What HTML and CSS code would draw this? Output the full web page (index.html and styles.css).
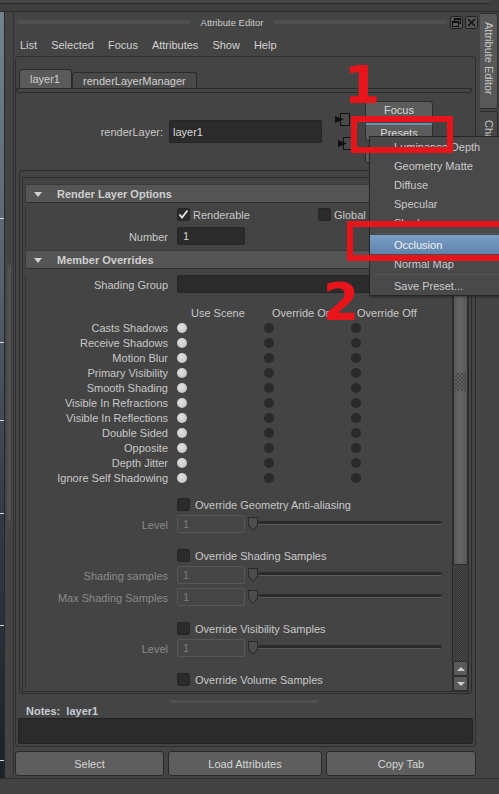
FILE: index.html
```html
<!DOCTYPE html>
<html>
<head>
<meta charset="utf-8">
<title>Attribute Editor</title>
<link rel="stylesheet" href="styles.css">
</head>
<body>
<div class="topstrip"><div class="prevpanel"></div></div>
<div class="workspace">
  <div class="leftstrip">
    <div class="viewport"></div>
    <div class="splitter"><div class="vgrip"></div></div>
  </div>
  <div class="editor">
    <div class="titlebar">
      <div class="grip"></div>
      <div class="title">Attribute Editor</div>
      <div class="grip"></div>
      <div class="tbtn first"><svg width="11" height="11" viewBox="0 0 11 11"><rect x="3.5" y="1.5" width="6" height="5" fill="none" stroke="#111"/><rect x="1.5" y="4.5" width="6" height="5" fill="#5a5a5a" stroke="#111"/><line x1="1.5" y1="5.5" x2="7.5" y2="5.5" stroke="#111"/><line x1="3.5" y1="2.5" x2="9.5" y2="2.5" stroke="#111"/></svg></div>
      <div class="tbtn"><svg width="11" height="11" viewBox="0 0 11 11"><path d="M2 2 L9 9 M9 2 L2 9" stroke="#111" stroke-width="1.6"/></svg></div>
    </div>
    <div class="menubar">
      <span>List</span><span>Selected</span><span>Focus</span><span>Attributes</span><span>Show</span><span>Help</span>
    </div>
    <div class="frame">
      <div class="tabs">
        <div class="tab active">layer1</div>
        <div class="tab">renderLayerManager</div>
      </div>
      <div class="tabpane"></div>
      <div class="rlsection">
        <div class="rllabel">renderLayer:</div>
        <div class="rlfield">layer1</div>
        <div class="conn">
          <svg class="conn1" width="15" height="13" viewBox="0 0 15 13"><rect x="5.5" y="0.5" width="9" height="12" fill="#4a4a4a" stroke="#111"/><path d="M0 3 L9 6.5 L0 10Z" fill="#111"/></svg>
          <svg class="conn2" width="15" height="13" viewBox="0 0 15 13"><rect x="5.5" y="0.5" width="9" height="12" fill="#4a4a4a" stroke="#111"/><path d="M0 3 L9 6.5 L0 10Z" fill="#111"/></svg>
        </div>
        <div class="rlbtns">
          <div class="btn">Focus</div>
          <div class="btn pressed">Presets</div>
          <div class="btn third"></div>
        </div>
      </div>
      <div class="scrollframe">
        <div class="scrollinner">
          <div class="content">
            <div class="sechead"><span class="tri"></span>Render Layer Options</div>
            <div class="secbody">
              <div class="cbrow first">
                <span class="cb"><svg width="13" height="13" viewBox="0 0 13 13"><polyline points="2.5,6.5 5,9.5 10.5,2.5" fill="none" stroke="#e6e6e6" stroke-width="1.8"/></svg></span>
                <span class="cbtext rend">Renderable</span>
                <span class="cb"></span>
                <span class="cbtext">Global</span>
              </div>
              <div class="frow numrow">
                <span class="lbl">Number</span>
                <span class="field">1</span>
              </div>
            </div>
            <div class="sechead second"><span class="tri"></span>Member Overrides</div>
            <div class="secbody">
              <div class="frow sgrow">
                <span class="lbl">Shading Group</span>
                <span class="field wide"></span>
              </div>
              <div class="colhead">
                <span class="ch1">Use Scene</span><span class="ch2">Override On</span><span class="ch3">Override Off</span>
              </div>
              <div class="rrow"><span class="lbl">Casts Shadows</span><i class="dot on"></i><i class="dot"></i><i class="dot"></i></div>
              <div class="rrow"><span class="lbl">Receive Shadows</span><i class="dot on"></i><i class="dot"></i><i class="dot"></i></div>
              <div class="rrow"><span class="lbl">Motion Blur</span><i class="dot on"></i><i class="dot"></i><i class="dot"></i></div>
              <div class="rrow"><span class="lbl">Primary Visibility</span><i class="dot on"></i><i class="dot"></i><i class="dot"></i></div>
              <div class="rrow"><span class="lbl">Smooth Shading</span><i class="dot on"></i><i class="dot"></i><i class="dot"></i></div>
              <div class="rrow"><span class="lbl">Visible In Refractions</span><i class="dot on"></i><i class="dot"></i><i class="dot"></i></div>
              <div class="rrow"><span class="lbl">Visible In Reflections</span><i class="dot on"></i><i class="dot"></i><i class="dot"></i></div>
              <div class="rrow"><span class="lbl">Double Sided</span><i class="dot on"></i><i class="dot"></i><i class="dot"></i></div>
              <div class="rrow"><span class="lbl">Opposite</span><i class="dot on"></i><i class="dot"></i><i class="dot"></i></div>
              <div class="rrow"><span class="lbl">Depth Jitter</span><i class="dot on"></i><i class="dot"></i><i class="dot"></i></div>
              <div class="rrow"><span class="lbl">Ignore Self Shadowing</span><i class="dot on"></i><i class="dot"></i><i class="dot"></i></div>

              <div class="cbrow ovr first-ovr"><span class="cb"></span><span class="cbtext">Override Geometry Anti-aliasing</span></div>
              <div class="frow drow"><span class="lbl dis">Level</span><span class="field dis">1</span><span class="sthumb"></span><span class="strack"></span></div>

              <div class="cbrow ovr"><span class="cb"></span><span class="cbtext">Override Shading Samples</span></div>
              <div class="frow drow"><span class="lbl dis">Shading samples</span><span class="field dis">1</span><span class="sthumb"></span><span class="strack"></span></div>
              <div class="frow drow"><span class="lbl dis">Max Shading Samples</span><span class="field dis">1</span><span class="sthumb"></span><span class="strack"></span></div>

              <div class="cbrow ovr"><span class="cb"></span><span class="cbtext">Override Visibility Samples</span></div>
              <div class="frow drow"><span class="lbl dis">Level</span><span class="field dis">1</span><span class="sthumb"></span><span class="strack"></span></div>

              <div class="cbrow ovr"><span class="cb"></span><span class="cbtext">Override Volume Samples</span></div>
            </div>
          </div>
          <div class="vscroll">
            <div class="thumb"><div class="tgrip"></div></div>
            <div class="track"></div>
            <div class="arrow"><span class="up"></span></div>
            <div class="arrow"><span class="down"></span></div>
          </div>
        </div>
      </div>
      <div class="notes">
        <div class="ngrip"></div>
        <div class="nlabel">Notes:&nbsp; layer1</div>
        <div class="ntext"></div>
      </div>
    </div>
    <div class="bottombtns">
      <div class="bbtn b1">Select</div>
      <div class="bbtn b2">Load Attributes</div>
      <div class="bbtn b3">Copy Tab</div>
    </div>
  </div>
  <div class="sidetabs">
    <div class="stab active">Attribute Editor</div>
    <div class="stab">Channel Box / Layer Editor</div>
  </div>
</div>
<div class="bottomstrip"></div>

<div class="popup">
  <div class="pitem">Luminance Depth</div>
  <div class="pitem">Geometry Matte</div>
  <div class="pitem">Diffuse</div>
  <div class="pitem">Specular</div>
  <div class="pitem">Shadow</div>
  <div class="psep"></div>
  <div class="pitem hl">Occlusion</div>
  <div class="pitem">Normal Map</div>
  <div class="psep"></div>
  <div class="pitem">Save Preset...</div>
</div>
<div class="redbox r1"></div>
<div class="redbox r2"></div>
<div class="reddigit d1">1</div>
<div class="reddigit d2">2</div>
</body>
</html>
```
FILE: styles.css
```css
* { box-sizing: border-box; }
html, body { margin: 0; padding: 0; }
body {
  width: 499px; height: 794px; overflow: hidden; position: relative;
  background: #444444;
  font-family: "Liberation Sans", Arial, sans-serif;
  font-size: 11px; color: #c8c8c8;
}

/* top strip */
.topstrip { height: 12px; background: #3f3f3f; border-bottom: 1px solid #2c2c2c; }
.prevpanel { height: 4px; background: #464646; border-bottom: 1px solid #2b2b2b; margin-right: 8px; border-bottom-right-radius: 3px; }

.workspace { display: flex; height: 766px; }

/* left strip */
.leftstrip { width: 14px; display: flex; border-right: 1px solid #333; }
.viewport {
  width: 5px; border-right: 1px solid #272727;
  background:
    linear-gradient(#d5dbe1, #d5dbe1) 0 206px / 4px 1px no-repeat,
    linear-gradient(#d5dbe1, #d5dbe1) 0 330px / 4px 1px no-repeat,
    linear-gradient(#d5dbe1, #d5dbe1) 0 408px / 4px 1px no-repeat,
    linear-gradient(#d5dbe1, #d5dbe1) 0 501px / 4px 1px no-repeat,
    linear-gradient(#d5dbe1, #d5dbe1) 0 613px / 4px 1px no-repeat,
    linear-gradient(#d5dbe1, #d5dbe1) 0 748px / 4px 1px no-repeat,
    linear-gradient(180deg, #74828f 0%, #56616d 35%, #333c46 65%, #1b2129 100%);
}
.splitter { flex: 1; display: flex; justify-content: center; padding-top: 253px; }
.vgrip { width: 4px; height: 256px; background: repeating-conic-gradient(#5c5c5c 0 25%, transparent 0 50%) 0 0 / 2px 2px; }

/* editor */
.editor { width: 465px; display: flex; flex-direction: column; }

.titlebar { height: 20px; display: flex; align-items: center; padding: 0 1px 0 3px; }
.grip { flex: 1; height: 4px; background: repeating-conic-gradient(#5a5a5a 0 25%, transparent 0 50%) 0 0 / 2px 2px; }
.title { margin: 0 11px; font-size: 9.5px; color: #cdcdcd; }
.tbtn { width: 13px; height: 13px; border: 1px solid #222; background: #565656; border-radius: 2px; display: flex; align-items: center; justify-content: center; margin-left: 2px; }
.tbtn.first { margin-left: 3px; }
.tbtn svg { display: block; }

.menubar { height: 24px; display: flex; align-items: center; padding: 1px 0 0 6px; gap: 14px; color: #d2d2d2; }

.frame {
  height: 691px; margin: 0 3px 0 1px;
  border: 1px solid #2e2e2e; border-radius: 3px;
  display: flex; flex-direction: column;
}
.tabs { height: 31px; display: flex; align-items: flex-end; padding-left: 3px; }
.tab {
  height: 16px; padding: 0 10px; line-height: 16px;
  border: 1px solid #2b2b2b; border-bottom: none; border-radius: 3px 3px 0 0;
  background: #494949; color: #d0d0d0;
}
.tab.active { height: 19px; line-height: 19px; background: #5a5a5a; width: 53px; }
.tabpane { height: 5px; border: 1px solid #2b2b2b; border-radius: 0 0 3px 3px; margin-right: 3px; }

.rlsection { height: 77px; display: flex; align-items: flex-start; padding-top: 8px; }
.rllabel { width: 147px; margin-top: 19px; height: 23px; line-height: 24px; text-align: right; color: #cacaca; }
.rlfield {
  width: 153px; height: 23px; margin: 19px 0 0 6px;
  background: #2b2b2b; border: 1px solid #262626; border-radius: 2px;
  padding-left: 3px; line-height: 22px; color: #d8d8d8;
}
.conn { margin-left: 13px; width: 18px; display: flex; flex-direction: column; padding-top: 12px; }
.conn svg { display: block; }
.conn .conn2 { margin: 11px 0 0 3px; }
.rlbtns { margin-left: 12px; width: 68px; display: flex; flex-direction: column; gap: 4px; }
.btn {
  height: 18px; line-height: 17px; text-align: center;
  background: #5c5c5c; border: 1px solid #2c2c2c; border-radius: 3px;
  color: #d8d8d8;
}
.btn.pressed { border-top: 2px solid #6f8fae; line-height: 16px; }
.btn.third { height: 17px; margin-top: 1px; }

/* scroll area */
.scrollframe {
  height: 524px; margin: 0 3px;
  border: 1px solid #2c2c2c; border-radius: 3px;
  padding: 6px 2px 1px 2px;
}
.scrollinner { height: 100%; border: 1px solid #2c2c2c; display: flex; overflow: hidden; }
.content { flex: 1; padding: 6px 2px 0 2px; overflow: hidden; }

.sechead {
  height: 19px; display: flex; align-items: center; padding: 1px 0 0 8px;
  background: #555555; border: 1px solid #3a3a3a; border-bottom-color: #2e2e2e;
  font-weight: bold; color: #cfcfcf;
}
.sechead.second { margin-top: 2px; }
.tri { width: 0; height: 0; border-left: 4px solid transparent; border-right: 4px solid transparent; border-top: 5px solid #d2d2d2; margin-right: 15px; }
.secbody { border-left: 1px solid #333; padding-bottom: 3px; }

.lbl { width: 142px; text-align: right; flex: none; }
.lbl.dis { color: #8a8a8a; }

.cbrow { height: 14px; display: flex; align-items: center; padding-left: 151px; }
.cbrow.first { margin-top: 4px; }
.cb { width: 13px; height: 13px; background: #2b2b2b; border: 1px solid #262626; border-radius: 2px; flex: none; }
.cb svg { display: block; margin: -1px 0 0 -1px; }
.cbtext { margin-left: 3px; padding-top: 1px; }
.cbtext.rend { width: 125px; }
.cbrow.ovr { margin-top: 15px; }
.cbrow.ovr .cbtext { margin-left: 5px; }
.cbrow.first-ovr { margin-top: 12px; }

.frow { height: 18px; display: flex; align-items: center; }
.frow .lbl { padding-top: 1px; }
.numrow { margin-top: 6px; }
.sgrow { margin-top: 6px; }
.drow { margin-top: 4px; }
.field {
  width: 68px; height: 18px; margin-left: 9px; flex: none;
  background: #2b2b2b; border: 1px solid #262626; border-radius: 2px;
  padding-left: 5px; line-height: 17px; color: #d2d2d2;
}
.field.wide { width: 264px; }
.field.dis { background: #454545; border-color: #575757; color: #7c7c7c; }
.sthumb {
  width: 10px; height: 14px; margin-left: 3px; flex: none;
  background: #2a2a2a;
  clip-path: polygon(0 0, 100% 0, 100% 60%, 50% 100%, 0 60%);
  position: relative;
}
.sthumb::after {
  content: ""; position: absolute; left: 1px; top: 1px; right: 1px; bottom: 1px;
  background: #4d4d4d;
  clip-path: polygon(0 0, 100% 0, 100% 58%, 50% 100%, 0 58%);
}
.strack { width: 184px; height: 4px; margin-bottom: 2px; background: #2b2b2b; border-bottom: 1px solid #5a5a5a; border-radius: 2px; flex: none; }

.colhead { height: 15px; display: flex; align-items: center; margin-top: 12px; padding: 1px 0 0 165px; }
.ch1 { width: 81px; }
.ch2 { width: 85px; }
.rrow { height: 15px; display: flex; align-items: center; }
.rrow .lbl { padding-top: 1px; }
.dot { width: 10px; height: 10px; border-radius: 50%; background: #2a2a2a; margin-left: 77px; flex: none; }
.dot.on { background: radial-gradient(circle at 40% 40%, #e2e2e2, #bdbdbd); margin-left: 9px; }

.vscroll { width: 16px; display: flex; flex-direction: column; background: #3b3b3b; border-left: 1px solid #2c2c2c; }
.thumb {
  height: 387px; flex: none;
  background: linear-gradient(90deg, #565656, #656565 40%, #636363 60%, #555555);
  border: 1px solid #2e2e2e; border-radius: 2px;
  display: flex; justify-content: center; align-items: center; padding-top: 20px;
}
.tgrip { width: 11px; height: 18px; background: repeating-conic-gradient(#474747 0 25%, transparent 0 50%) 0 0 / 4px 4px; }
.track { flex: 1; background: repeating-conic-gradient(#333 0 25%, #4a4a4a 0 50%) 0 0 / 2px 2px; }
.arrow {
  height: 15px; flex: none; background: #5a5a5a; border: 1px solid #2e2e2e; border-radius: 2px;
  display: flex; align-items: center; justify-content: center;
}
.up { width: 0; height: 0; border-left: 4px solid transparent; border-right: 4px solid transparent; border-bottom: 4px solid #cfcfcf; }
.down { width: 0; height: 0; border-left: 4px solid transparent; border-right: 4px solid transparent; border-top: 4px solid #cfcfcf; }

/* notes */
.notes { flex: 1; padding: 0 2px 2px 2px; display: flex; flex-direction: column; }
.ngrip { width: 148px; height: 3px; margin: 6px 0 0 152px; background: repeating-conic-gradient(#5a5a5a 0 25%, transparent 0 50%) 0 0 / 2px 2px; }
.nlabel { height: 15px; line-height: 16px; padding-left: 8px; font-weight: bold; color: #c6ccd3; }
.ntext { height: 26px; background: #2b2b2b; border: 1px solid #222; border-radius: 2px; }

.bottombtns { display: flex; gap: 4px; margin: 4px 3px 0 1px; height: 25px; }
.bbtn {
  height: 25px; line-height: 24px; text-align: center;
  background: #5e5e5e; border: 1px solid #2a2a2a; border-radius: 3px; color: #d6d6d6;
}
.b1 { width: 149px; }
.b2 { width: 154px; }
.b3 { width: 150px; }

/* side tabs */
.sidetabs { width: 20px; padding: 1px 1px 0 1px; display: flex; flex-direction: column; }
.stab {
  height: 150px; writing-mode: vertical-rl;
  background: #474747; border: 1px solid #2b2b2b; border-left: none; border-radius: 0 3px 3px 0;
  padding-top: 8px; line-height: 17px; color: #c8c8c8;
}
.stab.active { height: 96px; background: #585858; }
.stab + .stab { margin-top: 2px; }

.bottomstrip { height: 16px; background: #424242; border-top: 1px solid #2d2d2d; }

/* popup menu overlay */
.popup {
  position: absolute; left: 369px; top: 136px; width: 140px;
  background: #494949; border: 1px solid #262626;
  box-shadow: 1px 1px 2px rgba(0,0,0,0.4);
}
.pitem { height: 19px; line-height: 21px; padding-left: 24px; color: #cacaca; }
.pitem.hl { background: linear-gradient(#7a9ec5, #5e82aa); color: #f2f2f2; }
.psep { height: 1px; background: #343434; margin: 1px 0 1px 5px; border-bottom: 1px solid #555; }

/* annotations */
.redbox { position: absolute; border: 6px solid #e8141c; }
.r1 { left: 351px; top: 116px; width: 102px; height: 37px; }
.r2 { left: 347px; top: 221px; width: 170px; height: 40px; }
.reddigit {
  position: absolute; font-family: "DejaVu Sans", sans-serif; font-weight: bold;
  font-size: 52px; line-height: 52px; color: #e8141c;
}
.d1 { left: 344px; top: 59px; }
.d2 { left: 323px; top: 276px; }
```
